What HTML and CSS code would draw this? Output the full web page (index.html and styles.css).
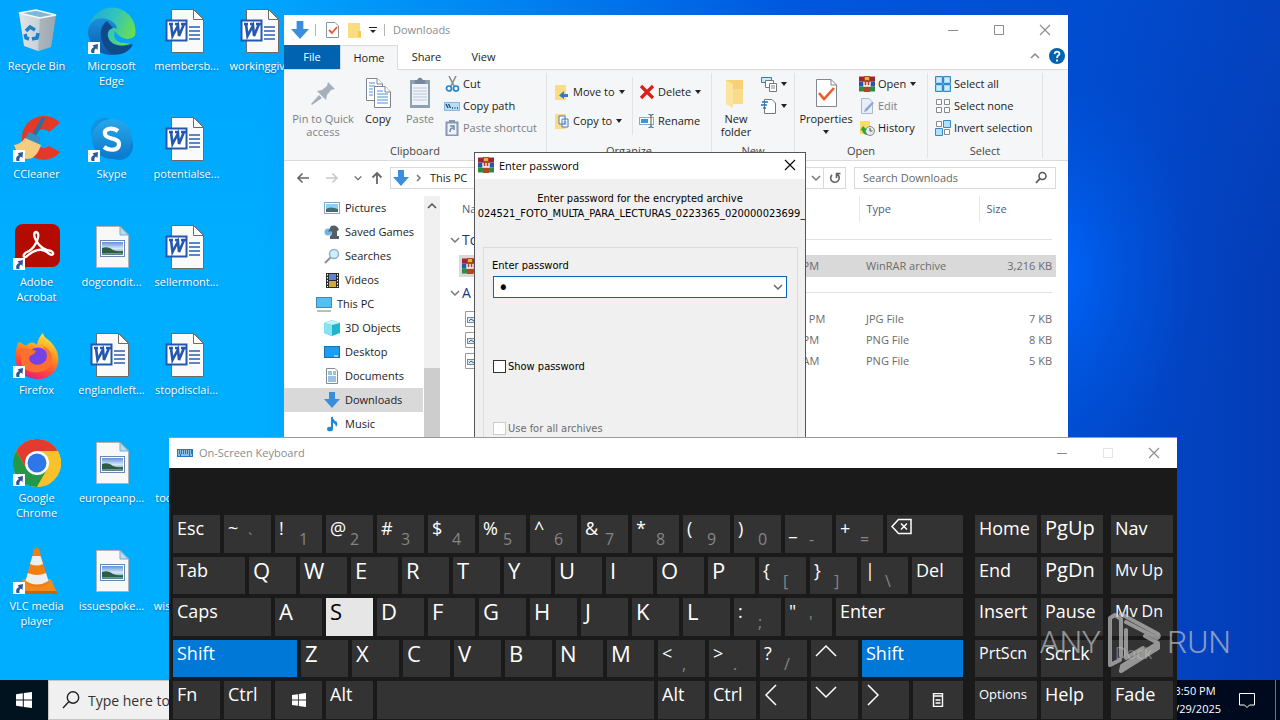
FILE: index.html
```html
<!DOCTYPE html>
<html lang="en">
<head>
<meta charset="utf-8">
<title>Desktop</title>
<link rel="stylesheet" href="styles.css">
</head>
<body>
<svg class="defs" aria-hidden="true">
  <defs>
    <linearGradient id="gEdge" x1="0" y1="0" x2="1" y2="0.5"><stop offset="0" stop-color="#1fa6d8"/><stop offset=".5" stop-color="#30c3c0"/><stop offset="1" stop-color="#6be04a"/></linearGradient>
    <linearGradient id="gEdge2" x1="0" y1="0" x2="0" y2="1"><stop offset="0" stop-color="#1b8fe0"/><stop offset="1" stop-color="#0c59a4"/></linearGradient>
    <linearGradient id="gFire" x1=".8" y1="0" x2=".4" y2="1"><stop offset="0" stop-color="#fff04a"/><stop offset=".4" stop-color="#ff9a1f"/><stop offset=".75" stop-color="#ff4a36"/><stop offset="1" stop-color="#e3207c"/></linearGradient>
    <linearGradient id="gSky" x1="0" y1="0" x2="0" y2="1"><stop offset="0" stop-color="#28a8ea"/><stop offset="1" stop-color="#0a78cc"/></linearGradient>
    <linearGradient id="gPhoto" x1="0" y1="0" x2="0" y2="1"><stop offset="0" stop-color="#5d94d8"/><stop offset=".5" stop-color="#d5e8f4"/><stop offset="1" stop-color="#4a7f84"/></linearGradient>
    <linearGradient id="gBin" x1="0" y1="0" x2="1" y2="0"><stop offset="0" stop-color="#dfe5e8"/><stop offset=".55" stop-color="#c9d1d6"/><stop offset="1" stop-color="#8d9faa"/></linearGradient>
  </defs>
  <symbol id="shortcut" viewBox="0 0 12 12"><rect width="12" height="12" fill="#fff"/><path d="M3.500 11C2.600 8 3.500 6 6 5L4.500 3.200 10 2 9.500 8 8 6.600C6.500 7.500 6 9 6.500 11z" fill="#2b5797"/></symbol>
  <symbol id="bin" viewBox="0 0 48 48"><path d="M6 6 23 3 43 8 38 40 25 44 11 39z" fill="url(#gBin)"/><path d="M27 11 43 8 38 40 25 44z" fill="#9faab2" opacity=".7"/><path d="M6 6 23 3 43 8 27 11z" fill="#7fb9d6" stroke="#f4f8fa" stroke-width="1.500"/><g fill="none" stroke="#1d7fc8" stroke-width="3.500"><path d="M13 24 17 20 22 23"/><path d="M25 26 24 31 19 32"/><path d="M12 27 13 31 16 32"/></g></symbol>
  <symbol id="edge" viewBox="0 0 48 48"><circle cx="24" cy="24" r="23.500" fill="url(#gEdge)"/><path d="M0 25C1 12 12 10 19 12 26 14 29 19 29 22 23 18 18 24 20 30 22 38 33 41 45 36 40 44 32 48 24 48 10 48 1 38 0 25z" fill="url(#gEdge2)"/><path d="M19 14C10 20 10 38 24 47 34 49 42 44 45 37 33 42 22 38 20 30 19 25 21 22 25 21z" fill="#114a8b"/><path d="M27 24C33 34 45 34 48 27 49 42 43 36 36 36 30 36 24 32 27 24z" fill="#00a5ff"/></symbol>
  <symbol id="word" viewBox="4 0 48 48"><path d="M12.500 2.500H35L44.500 12V45.500H12.500z" fill="#fafafa" stroke="#6f6a66"/><path d="M34.500 2.500V12.500H44.500z" fill="#fff" stroke="#6f6a66"/><path d="M30 20H41M30 24H41M30 28H41M30 32H41" stroke="#2b5fb5" stroke-width="1.300"/><rect x="7.500" y="13.500" width="20" height="20" fill="#fff" stroke="#2457ae" stroke-width="2"/><path d="M10 17H14M16 17H20M22 17H27M12 17 13.500 29 19 18.500 20 29 25 17" fill="none" stroke="#2457ae" stroke-width="2.600"/></symbol>
  <symbol id="photo" viewBox="0 0 48 48"><path d="M8.500 3.500H32L40.500 12V44.500H8.500z" fill="#f8f8f8" stroke="#b4b0b8"/><path d="M32 3.500V12H40.500z" fill="#b9dcf3" stroke="#7aa9cc"/><rect x="12.500" y="17.500" width="24" height="16" fill="#fff" stroke="#6986b5"/><rect x="14" y="19" width="21" height="13" fill="url(#gPhoto)"/><path d="M14 25Q21 23 25 27 30 29 35 28V30H14z" fill="#2f5c46"/></symbol>
  <symbol id="ccleaner" viewBox="0 0 48 48"><path d="M47 8C34-6 8 2 9 25 10 45 36 51 47 37L36 31C29 36 22 32 22 24 22 15 31 12 36 17z" fill="#e23a26"/><path d="M30 4 19 24" stroke="#2d6f9f" stroke-width="4" stroke-linecap="round"/><path d="M16 17 27 22 27 30 12 24z" fill="#3b8ec4"/><path d="M12 23 28 30Q23 45 13 44 4 40 1 30 8 29 12 23z" fill="#f4cd7e"/></symbol>
  <symbol id="skype" viewBox="0 0 48 48"><circle cx="17" cy="17" r="14" fill="#1192dc"/><circle cx="31" cy="31" r="14" fill="#0a80d0"/><circle cx="24" cy="24" r="20" fill="url(#gSky)"/><path d="M30 16C25 12 16 13 17 19 18 25 31 22 31 29 31 36 21 36 16 32" fill="none" stroke="#fff" stroke-width="4.200"/></symbol>
  <symbol id="acrobat" viewBox="0 0 48 48"><rect x="2" y="1" width="45" height="43" rx="8" fill="#b30b00"/><path d="M23 9C18 10 24 26 38 28 42 30 40 34 35 30 29 24 20 27 13 34 9 35 10 30 16 28 22 25 29 10 23 9z" fill="none" stroke="#fff" stroke-width="2.300"/></symbol>
  <symbol id="firefox" viewBox="0 0 48 48"><path d="M5 12C9 9 9 15 14 14 19 9 23 13 24 14 25 7 29 3 30 2 31 8 36 7 41 15 51 29 43 48 25 48 9 48-3 34 5 12z" fill="url(#gFire)"/><circle cx="25" cy="27" r="10.500" fill="#7542e5"/><path d="M5 19C10 15 17 18 23 20 21 25 16 23 16 28 18 35 29 36 33 29 36 22 31 17 29 15 39 17 41 28 37 35 31 44 13 43 9 34 7 30 9 24 5 19z" fill="#ff6f2f"/></symbol>
  <symbol id="chrome" viewBox="0 0 48 48"><circle cx="24" cy="24" r="24" fill="#f9c22b"/><path d="M3.200 12A24 24 0 0 1 44.800 12H24L13.600 30z" fill="#e33b2e"/><path d="M3.200 12A24 24 0 0 0 24 48L34.400 30 13.600 30z" fill="#249847"/><path d="M24 12H44.800A24 24 0 0 1 24 48L34.400 30z" fill="#f9c22b"/><circle cx="24" cy="24" r="12" fill="#fff"/><circle cx="24" cy="24" r="9.500" fill="#2f76e8"/></symbol>
  <symbol id="vlc" viewBox="0 0 48 48"><path d="M10 32H38L44 46H3z" fill="#f08a1c"/><path d="M3 44H44V47H3z" fill="#c96408"/><path d="M21 2Q24 0 26 2L36 36Q24 44 12 36z" fill="#f47d11"/><path d="M19.500 9H27.500L30 17Q24 20 17 17zM14.800 26Q24 30 33 26L35.500 34Q24 41 12.500 34z" fill="#eceff0"/></symbol>
  <symbol id="down" viewBox="0 0 16 16"><path d="M5 0H11V7H16L8 16 0 7H5z" fill="#3b8ede"/></symbol>
  <symbol id="check" viewBox="0 0 16 16"><path d="M2.500.5H11L14.500 4V15.500H2.500z" fill="#fff" stroke="#8a949c"/><path d="M5 8 8 11 13 5" fill="none" stroke="#e8572a" stroke-width="1.800"/></symbol>
  <symbol id="folder" viewBox="0 0 16 16"><path d="M2 1H14V9L15 10V16H2z" fill="#fcdc80"/><path d="M12 9H15V15H12z" fill="#f3c95c"/></symbol>
  <symbol id="bigfolder" viewBox="0 0 32 32"><path d="M6 3H23V25H6z" fill="#f6d175"/><path d="M6 3 13 7V31L6 27z" fill="#fbe49b"/><path d="M13 12H23V27H13z" fill="#f9dc8b"/></symbol>
  <symbol id="caret" viewBox="0 0 8 8"><path d="M1 2H7L4 6z" fill="#222"/></symbol>
  <symbol id="pin" viewBox="0 0 32 32"><path d="M21 5 28 12 24 13 20 18 19 23 10 14 15 13 20 9zM12 18 15 21 5 28 4 27z" fill="#a5b0bb"/></symbol>
  <symbol id="copy" viewBox="0 0 32 32"><g fill="#fff" stroke="#7c858e"><path d="M4.500 1.500H15L20.500 7V23.500H4.500z"/><path d="M15 1.500V7H20.500" /><path d="M12.500 9.500H23L28.500 15V30.500H12.500z"/><path d="M23 9.500V15H28.500" /></g><path d="M7 6H13M7 9H13M7 12H11M7 15H11M7 18H11M15 14H21M15 17H26M15 20H26M15 23H26M15 26H26" stroke="#4a90d8"/></symbol>
  <symbol id="paste" viewBox="0 0 32 32"><rect x="6" y="3" width="20" height="28" fill="#90a0b4"/><rect x="8" y="7" width="16" height="21" fill="#f0f4fa"/><path d="M11 3H13Q16-2 19 3H21V7H11z" fill="#77879a"/><path d="M9 11H23M9 14H23M9 17H23M9 20H23M9 23H23" stroke="#b9c5d6"/></symbol>
  <symbol id="cut" viewBox="0 0 16 16"><path d="M5 0 10 10M12 0 7 10" stroke="#7f8b95" stroke-width="1.500"/><g fill="none" stroke="#2484cc" stroke-width="1.700"><circle cx="5" cy="12.500" r="2.500"/><circle cx="12" cy="12.500" r="2.500"/></g></symbol>
  <symbol id="path" viewBox="0 0 16 16"><rect x=".5" y="4.500" width="15" height="8" fill="#b7dcf6" stroke="#83b9e2"/><path d="M2 6 4 10M4.500 6 6.500 10M8 10H9M10.500 10H11.500M13 10H14" stroke="#24466b" stroke-width="1.300"/></symbol>
  <symbol id="pasteshort" viewBox="0 0 16 16"><path d="M2.500 2.500H13.500V15.500H2.500z" fill="#eef3fa" stroke="#8698b2" stroke-width="2"/><rect x="5" width="6" height="3" fill="#8698b2"/><path d="M6 12Q6 8 9 8M6 6H10V10" fill="none" stroke="#6d86a8" stroke-width="1.500"/></symbol>
  <symbol id="moveto" viewBox="0 0 16 16"><path d="M1 1H12V16H1z" fill="#fbdc83"/><path d="M14 10H10V7L5 11.500 10 15V13H14z" fill="#2a7ed0"/></symbol>
  <symbol id="copyto" viewBox="0 0 16 16"><path d="M1 1H12V16H1z" fill="#fbdc83"/><path d="M5 3H11V11H5zM8 6H14V14H8z" fill="#fff" stroke="#4b78b4"/><path d="M9.500 9H12.500M9.500 11H12.500" stroke="#4b90d8"/></symbol>
  <symbol id="delete" viewBox="0 0 16 16"><path d="M2 2 14 14M14 2 2 14" stroke="#d9201a" stroke-width="3.200"/></symbol>
  <symbol id="rename" viewBox="0 0 16 16"><rect x=".5" y="4.500" width="14" height="7" fill="#fff" stroke="#8ea8bd"/><rect x="2" y="6" width="7" height="4" fill="#3a94dc"/><path d="M9.500 1.500Q12 1 12 3V13Q12 15 9.500 14.500M14.500 1.500Q12 1 12 3M12 13Q12 15 14.500 14.500" fill="none" stroke="#555"/></symbol>
  <symbol id="newitem" viewBox="0 0 16 16"><path d="M.5 1.500H10.500V6.500H.5z" fill="#cfe8f8" stroke="#2f7eb6"/><path d="M4.500 4.500H12.500V11.500H4.500z" fill="#fff" stroke="#777"/><path d="M8.500 7.500H15.500V15.500H8.500z" fill="#fff" stroke="#777"/><path d="M10 10H14M10 12H14" stroke="#888"/></symbol>
  <symbol id="easy" viewBox="0 0 16 16"><path d="M3.500 1.500H11L14.500 5V15.500H3.500z" fill="#fff" stroke="#777"/><path d="M1 4H7M0 7H6M2 10H5" stroke="#1f76bd" stroke-width="1.300"/></symbol>
  <symbol id="props" viewBox="0 0 32 32"><path d="M6.500 2.500H21L26.500 8V29.500H6.500z" fill="#fff" stroke="#808890"/><path d="M21 2.500V8H26.500" fill="none" stroke="#808890"/><path d="M9 16 14 22 24 11" fill="none" stroke="#ea5b27" stroke-width="2.600"/></symbol>
  <symbol id="rar" viewBox="0 0 16 16"><rect width="16" height="5" y=".5" fill="#a3232e"/><rect width="16" height="5" y="5.500" fill="#2857a6"/><rect width="16" height="5" y="10.500" fill="#2f8a43"/><rect x="5" width="6" height="16" fill="#b34724"/><path d="M5 6V10H11V6M8 6V10" fill="none" stroke="#fff" stroke-width="1.300"/><rect x="6" y="1" width="4" height="3" fill="#e3b43c"/></symbol>
  <symbol id="edit" viewBox="0 0 16 16"><path d="M2.500.5H10L13.500 4V15.500H2.500z" fill="#e7eef8" stroke="#a8b8d0"/><path d="M15 5 8 13 5 14 6 11 13 4z" fill="#93a9c8"/></symbol>
  <symbol id="history" viewBox="0 0 16 16"><path d="M1 1H11V14H1z" fill="#fbdc6a"/><circle cx="11" cy="11" r="4.500" fill="#e6e9ea" stroke="#888"/><path d="M11 8V11H13.500" fill="none" stroke="#555"/><path d="M1 11 4 6 8 10H6Q6 13 9 15 4 15 3 10z" fill="#2ea33c"/></symbol>
  <symbol id="selall" viewBox="0 0 16 16"><path d="M.5.5H7.500V7.500H.5zM8.500.5H15.500V7.500H8.500zM.5 8.500H7.500V15.500H.5zM8.500 8.500H15.500V15.500H8.500z" fill="#9fd5fb" stroke="#3289c9"/><path d="M2 2H6V6H2zM10 2H14V6H10zM2 10H6V14H2zM10 10H14V14H10z" fill="#cdeaff"/></symbol>
  <symbol id="selnone" viewBox="0 0 16 16"><path d="M1.500 1.500H6.500V6.500H1.500zM9.500 1.500H14.500V6.500H9.500zM1.500 9.500H6.500V14.500H1.500zM9.500 9.500H14.500V14.500H9.500z" fill="#fff" stroke="#8a8a8a"/></symbol>
  <symbol id="selinv" viewBox="0 0 16 16"><path d="M1.500 1.500H6.500V6.500H1.500zM9.500 9.500H14.500V14.500H9.500z" fill="#fff" stroke="#8a8a8a"/><path d="M8.500.5H15.500V7.500H8.500zM.5 8.500H7.500V15.500H.5z" fill="#b5defc" stroke="#3289c9"/></symbol>
  <symbol id="chev-d" viewBox="0 0 12 12"><path d="M2 4 6 8 10 4" fill="none" stroke="currentColor" stroke-width="1.500"/></symbol>
  <symbol id="chev-u" viewBox="0 0 12 12"><path d="M2 8 6 4 10 8" fill="none" stroke="currentColor" stroke-width="1.500"/></symbol>
  <symbol id="chev-r" viewBox="0 0 12 12"><path d="M4 3 7 6 4 9" fill="none" stroke="currentColor" stroke-width="1.500"/></symbol>
  <symbol id="arrow-l" viewBox="0 0 16 16"><path d="M14 8H3M7.500 3.500 3 8 7.500 12.500" fill="none" stroke="currentColor" stroke-width="1.600"/></symbol>
  <symbol id="arrow-r" viewBox="0 0 16 16"><path d="M2 8H13M8.500 3.500 13 8 8.500 12.500" fill="none" stroke="currentColor" stroke-width="1.500"/></symbol>
  <symbol id="arrow-u" viewBox="0 0 16 16"><path d="M8 14V3M3.500 7.500 8 3 12.500 7.500" fill="none" stroke="currentColor" stroke-width="1.800"/></symbol>
  <symbol id="refresh" viewBox="0 0 16 16"><path d="M10.500 4.500A4.300 4.300 0 1 1 5 4.800M9.500 8 9.500 3.500H13.500" fill="none" stroke="#606060" stroke-width="1.600"/></symbol>
  <symbol id="loupe" viewBox="0 0 16 16"><circle cx="9.500" cy="6" r="3.500" fill="none" stroke="currentColor" stroke-width="1.500"/><path d="M7 8.500 3 13" stroke="currentColor" stroke-width="1.800"/></symbol>
  <symbol id="min" viewBox="0 0 12 12"><path d="M1 6.500H11" stroke="currentColor"/></symbol>
  <symbol id="max" viewBox="0 0 12 12"><path d="M1.500 1.500H10.500V10.500H1.500z" fill="none" stroke="currentColor"/></symbol>
  <symbol id="close" viewBox="0 0 12 12"><path d="M1 1 11 11M11 1 1 11" stroke="currentColor" stroke-width="1.100"/></symbol>
  <symbol id="pictures" viewBox="0 0 16 16"><rect x=".5" y="2.500" width="15" height="11" fill="#fff" stroke="#8aa6bd"/><rect x="2" y="4" width="12" height="8" fill="#8ed0f2"/><path d="M2 9Q6 6 14 9V12H2z" fill="#3d6f73"/></symbol>
  <symbol id="games" viewBox="0 0 16 16"><circle cx="4" cy="8" r="3.500" fill="#6fb4e6"/><path d="M7 2Q13 0 15 6L13 7V12H15V15H6V12Q9 10 7 7L4 8z" fill="#565d66"/></symbol>
  <symbol id="searches" viewBox="0 0 16 16"><circle cx="10" cy="6" r="4.500" fill="#d3edfb" stroke="#8db3cc" stroke-width="1.500"/><path d="M6.500 9.500 1 15" stroke="#8a9096" stroke-width="2"/></symbol>
  <symbol id="videos" viewBox="0 0 16 16"><rect x="2" y="1" width="13" height="15" fill="#2a2a2a"/><rect x="5" y="2" width="7" height="6" fill="#5f83cf"/><rect x="5" y="9" width="7" height="6" fill="#d0a83c"/><path d="M3.500 2V15M13.500 2V15" stroke="#fff" stroke-dasharray="1.500 1.500"/></symbol>
  <symbol id="pc" viewBox="0 0 16 16"><rect x=".5" y="1.500" width="15" height="10" fill="#55bff2" stroke="#3c89b8"/><path d="M1 15H15" stroke="#6f7a82"/></symbol>
  <symbol id="cube" viewBox="0 0 16 16"><path d="M0 3 8 0 16 3V13L8 16 0 13z" fill="#1fb5cf"/><path d="M0 3 8 5V16L0 13z" fill="#86e4ee"/><path d="M0 3 8 0 16 3 8 5z" fill="#c3f4f7"/></symbol>
  <symbol id="desk" viewBox="0 0 16 16"><rect x=".5" y="2.500" width="15" height="11" fill="#1b9cf0" stroke="#1471b8"/><path d="M10 12H14" stroke="#fff"/></symbol>
  <symbol id="docs" viewBox="0 0 16 16"><path d="M2.500.5H11L13.500 3V15.500H2.500z" fill="#fff" stroke="#848c94"/><path d="M4 4H8M4 6H8M9 4H12M9 6H12M4 9H12M4 11H12M4 13H12" stroke="#3684c6"/></symbol>
  <symbol id="music" viewBox="0 0 16 16"><path d="M8 1V12" stroke="#1e87d6" stroke-width="2"/><path d="M8 0Q9 4 13 6 14 9 12 11 12 8 8 6z" fill="#1e87d6"/><ellipse cx="6" cy="13" rx="3" ry="2.300" fill="#1e87d6"/></symbol>
  <symbol id="imgfile" viewBox="0 0 16 16"><path d="M3.500.5H12L15.500 4V15.500H3.500z" fill="#fff" stroke="#999"/><rect x="5.500" y="6.500" width="7" height="5" fill="#d9ecf6" stroke="#6b8cab"/><path d="M7 10 9 8 12 10" stroke="#375f78" fill="none"/></symbol>
  <symbol id="kbd" viewBox="0 0 16 10"><rect y="1" width="16" height="8" fill="#2376c8"/><path d="M1 3H15M1 5H15" stroke="#fff" stroke-dasharray="1 1"/><path d="M1 7H3M4 7H12M13 7H15" stroke="#fff"/></symbol>
  <symbol id="win" viewBox="0 0 16 16"><path d="M0 2.300 6.800 1.300V7.500H0zM7.800 1.100 16 0V7.500H7.800zM0 8.500H6.800V14.700L0 13.700zM7.800 8.500H16V16L7.800 14.900z" fill="#fff"/></symbol>
</svg>

<main class="desktop">
  <div class="icons">
    <button class="app"><svg><use href="#bin"/></svg><span>Recycle Bin</span></button>
    <button class="app link"><svg><use href="#ccleaner"/></svg><svg class="badge"><use href="#shortcut"/></svg><span>CCleaner</span></button>
    <button class="app link"><svg><use href="#acrobat"/></svg><svg class="badge"><use href="#shortcut"/></svg><span>Adobe Acrobat</span></button>
    <button class="app link"><svg><use href="#firefox"/></svg><svg class="badge"><use href="#shortcut"/></svg><span>Firefox</span></button>
    <button class="app link"><svg><use href="#chrome"/></svg><svg class="badge"><use href="#shortcut"/></svg><span>Google Chrome</span></button>
    <button class="app link"><svg><use href="#vlc"/></svg><svg class="badge"><use href="#shortcut"/></svg><span>VLC media player</span></button>
    <button class="app link"><svg><use href="#edge"/></svg><svg class="badge"><use href="#shortcut"/></svg><span>Microsoft Edge</span></button>
    <button class="app link"><svg><use href="#skype"/></svg><svg class="badge"><use href="#shortcut"/></svg><span>Skype</span></button>
    <button class="app"><svg><use href="#photo"/></svg><span>dogcondit...</span></button>
    <button class="app"><svg><use href="#word"/></svg><span>englandleft...</span></button>
    <button class="app"><svg><use href="#photo"/></svg><span>europeanp...</span></button>
    <button class="app"><svg><use href="#photo"/></svg><span>issuespoke...</span></button>
    <button class="app"><svg><use href="#word"/></svg><span>membersb...</span></button>
    <button class="app"><svg><use href="#word"/></svg><span>potentialse...</span></button>
    <button class="app"><svg><use href="#word"/></svg><span>sellermont...</span></button>
    <button class="app"><svg><use href="#word"/></svg><span>stopdisclai...</span></button>
    <button class="app"><svg></svg><span>toocountri...</span></button>
    <button class="app"><svg></svg><span>wisconsinp...</span></button>
    <button class="app"><svg><use href="#word"/></svg><span>workinggiv...</span></button>
  </div>

  <section class="explorer" aria-label="Downloads">
    <header class="titlebar">
      <div class="quick">
        <svg class="i18"><use href="#down"/></svg><i></i>
        <svg class="i16"><use href="#check"/></svg><svg class="i16"><use href="#folder"/></svg><svg class="drop" viewBox="0 0 8 8"><path d="M0 1.500H8" stroke="#222"/><path d="M1 4H7L4 7z" fill="#222"/></svg><i></i>
        <span>Downloads</span>
      </div>
      <div class="controls"><button aria-label="Minimize"><svg><use href="#min"/></svg></button><button aria-label="Maximize"><svg><use href="#max"/></svg></button><button aria-label="Close"><svg><use href="#close"/></svg></button></div>
    </header>
    <nav class="tabs">
      <button class="file">File</button><button class="on">Home</button><button>Share</button><button>View</button>
      <svg class="i12"><use href="#chev-u"/></svg>
      <svg class="help" viewBox="0 0 16 16"><circle cx="8" cy="8" r="8" fill="#0063b1"/><path d="M5.500 6Q6 3.500 8.300 3.600 11 4 10.300 6.500 8 8 8 10M8 11.500V13.500" fill="none" stroke="#fff" stroke-width="1.800"/></svg>
    </nav>
    <div class="ribbon">
      <div class="group clip">
        <div class="tools">
          <button class="big dim pinb"><svg><use href="#pin"/></svg>Pin to Quick access</button>
          <button class="big"><svg><use href="#copy"/></svg>Copy</button>
          <button class="big dim"><svg><use href="#paste"/></svg>Paste</button>
          <div class="stack">
            <button><svg><use href="#cut"/></svg>Cut</button>
            <button><svg><use href="#path"/></svg>Copy path</button>
            <button class="dim"><svg><use href="#pasteshort"/></svg>Paste shortcut</button>
          </div>
        </div>
        <h2>Clipboard</h2>
      </div>
      <div class="group org">
        <div class="tools">
          <div class="stack loose"><button><svg><use href="#moveto"/></svg>Move to<svg class="c"><use href="#caret"/></svg></button><button><svg><use href="#copyto"/></svg>Copy to<svg class="c"><use href="#caret"/></svg></button></div>
          <div class="stack loose ruled"><button><svg><use href="#delete"/></svg>Delete<svg class="c"><use href="#caret"/></svg></button><button><svg><use href="#rename"/></svg>Rename</button></div>
        </div>
        <h2>Organize</h2>
      </div>
      <div class="group new">
        <div class="tools">
          <button class="big"><svg><use href="#bigfolder"/></svg>New folder</button>
          <div class="stack"><button aria-label="New item"><svg><use href="#newitem"/></svg><svg class="c"><use href="#caret"/></svg></button><button aria-label="Easy access"><svg><use href="#easy"/></svg><svg class="c"><use href="#caret"/></svg></button></div>
        </div>
        <h2>New</h2>
      </div>
      <div class="group open">
        <div class="tools">
          <button class="big"><svg><use href="#props"/></svg>Properties<svg class="c"><use href="#caret"/></svg></button>
          <div class="stack"><button><svg><use href="#rar"/></svg>Open<svg class="c"><use href="#caret"/></svg></button><button class="dim"><svg><use href="#edit"/></svg>Edit</button><button><svg><use href="#history"/></svg>History</button></div>
        </div>
        <h2>Open</h2>
      </div>
      <div class="group sel">
        <div class="tools">
          <div class="stack"><button><svg><use href="#selall"/></svg>Select all</button><button><svg><use href="#selnone"/></svg>Select none</button><button><svg><use href="#selinv"/></svg>Invert selection</button></div>
        </div>
        <h2>Select</h2>
      </div>
    </div>
    <div class="location">
      <div class="history"><svg class="i16"><use href="#arrow-l"/></svg><svg class="i16 off"><use href="#arrow-r"/></svg><svg class="i10"><use href="#chev-d"/></svg><svg class="i16"><use href="#arrow-u"/></svg></div>
      <div class="address"><svg class="i16"><use href="#down"/></svg><svg class="i12"><use href="#chev-r"/></svg><span>This PC</span><svg class="i12 end"><use href="#chev-d"/></svg><button aria-label="Refresh"><svg class="i16"><use href="#refresh"/></svg></button></div>
      <label class="search"><input type="text" placeholder="Search Downloads" aria-label="Search Downloads"><svg class="i16"><use href="#loupe"/></svg></label>
    </div>
    <div class="content">
      <ul class="tree">
        <li><svg><use href="#pictures"/></svg>Pictures</li>
        <li><svg><use href="#games"/></svg>Saved Games</li>
        <li><svg><use href="#searches"/></svg>Searches</li>
        <li><svg><use href="#videos"/></svg>Videos</li>
        <li class="top"><svg><use href="#pc"/></svg>This PC</li>
        <li><svg><use href="#cube"/></svg>3D Objects</li>
        <li><svg><use href="#desk"/></svg>Desktop</li>
        <li><svg><use href="#docs"/></svg>Documents</li>
        <li class="on"><svg><use href="#down"/></svg>Downloads</li>
        <li><svg><use href="#music"/></svg>Music</li>
      </ul>
      <div class="scroll"><svg class="i12"><use href="#chev-u"/></svg><div class="thumb"></div></div>
      <div class="files">
        <table>
          <colgroup><col class="c-exp"><col><col class="c-date"><col class="c-type"><col class="c-size"></colgroup>
          <thead><tr><th></th><th>Name</th><th aria-label="Date modified"></th><th class="sep">Type</th><th class="sep">Size</th></tr></thead>
          <tbody>
            <tr class="cat"><td><svg class="i12"><use href="#chev-d"/></svg></td><td colspan="4"><span>Today (1)</span></td></tr>
            <tr class="picked"><td></td><td><svg class="i16"><use href="#rar"/></svg></td><td>4/29/2025 3:49 PM</td><td>WinRAR archive</td><td class="num">3,216 KB</td></tr>
            <tr class="cat late"><td><svg class="i12"><use href="#chev-d"/></svg></td><td colspan="4"><span>A long time ago (3)</span></td></tr>
            <tr><td></td><td><svg class="i16"><use href="#imgfile"/></svg></td><td>4/13/2024 10:17 PM</td><td>JPG File</td><td class="num">7 KB</td></tr>
            <tr><td></td><td><svg class="i16"><use href="#imgfile"/></svg></td><td>4/19/2024 6:23 PM</td><td>PNG File</td><td class="num">8 KB</td></tr>
            <tr><td></td><td><svg class="i16"><use href="#imgfile"/></svg></td><td>4/20/2024 8:05 AM</td><td>PNG File</td><td class="num">5 KB</td></tr>
          </tbody>
        </table>
      </div>
    </div>
  </section>

  <section class="dialog" role="dialog" aria-label="Enter password">
    <header><svg class="i16"><use href="#rar"/></svg><span>Enter password</span><button aria-label="Close"><svg class="i12"><use href="#close"/></svg></button></header>
    <p>Enter password for the encrypted archive</p>
    <p class="name"><span>024521_FOTO_MULTA_PARA_LECTURAS_0223365_020000023699_</span></p>
    <div class="box">
      <label for="pw">Enter password</label>
      <div class="field"><input id="pw" type="password" value="s"><svg class="i12"><use href="#chev-d"/></svg></div>
      <label class="tick"><input type="checkbox">Show password</label>
      <label class="tick off"><input type="checkbox" disabled>Use for all archives</label>
    </div>
  </section>

  <footer class="taskbar">
    <button class="start" aria-label="Start"><svg class="i16"><use href="#win"/></svg></button>
    <label class="find"><svg viewBox="0 0 20 20"><circle cx="12" cy="7.500" r="5.700" fill="none" stroke="#222" stroke-width="1.400"/><path d="M8 11.500 2 18" stroke="#222" stroke-width="1.400"/></svg><input type="text" placeholder="Type here to search" aria-label="Type here to search"></label>
    <div class="clock"><span>3:50 PM</span><span>4/29/2025</span></div>
    <button class="notes" aria-label="Notifications"><svg viewBox="0 0 16 16"><path d="M.5 1.500H15.500V13H10.500L8 15.500 5.500 13H.5z" fill="none" stroke="#fff"/></svg></button>
    <i></i>
  </footer>

  <section class="osk" aria-label="On-Screen Keyboard">
    <header class="titlebar">
      <div class="quick"><svg class="kb"><use href="#kbd"/></svg><span>On-Screen Keyboard</span></div>
      <div class="controls"><button aria-label="Minimize"><svg><use href="#min"/></svg></button><button aria-label="Maximize" disabled><svg><use href="#max"/></svg></button><button aria-label="Close"><svg><use href="#close"/></svg></button></div>
    </header>
    <div class="keys">
      <div class="block main">
        <div class="row"><button>Esc</button><button>~<sub>`</sub></button><button>!<sub>1</sub></button><button>@<sub>2</sub></button><button>#<sub>3</sub></button><button>$<sub>4</sub></button><button>%<sub>5</sub></button><button>^<sub>6</sub></button><button>&amp;<sub>7</sub></button><button>*<sub>8</sub></button><button>(<sub>9</sub></button><button>)<sub>0</sub></button><button>_<sub>-</sub></button><button>+<sub>=</sub></button><button class="w76" aria-label="Backspace"><svg viewBox="0 0 22 24"><path d="M1 10.500 7.500 3.500H20V17.500H7.500zM10 7.500 16 13.500M16 7.500 10 13.500" fill="none" stroke="#fff" stroke-width="1.500"/></svg></button></div>
        <div class="row"><button class="w72">Tab</button><button class="l">Q</button><button class="l">W</button><button class="l">E</button><button class="l">R</button><button class="l">T</button><button class="l">Y</button><button class="l">U</button><button class="l">I</button><button class="l">O</button><button class="l">P</button><button>{<sub>[</sub></button><button>}<sub>]</sub></button><button>|<sub>\</sub></button><button class="w51">Del</button></div>
        <div class="row"><button class="w98">Caps</button><button class="l">A</button><button class="l hot">S</button><button class="l">D</button><button class="l">F</button><button class="l">G</button><button class="l">H</button><button class="l">J</button><button class="l">K</button><button class="l">L</button><button>:<sub>;</sub></button><button>"<sub>'</sub></button><button class="w127">Enter</button></div>
        <div class="row"><button class="w124 held">Shift</button><button class="l">Z</button><button class="l">X</button><button class="l">C</button><button class="l">V</button><button class="l">B</button><button class="l">N</button><button class="l">M</button><button>&lt;<sub>,</sub></button><button>&gt;<sub>.</sub></button><button>?<sub>/</sub></button><button aria-label="Up"><svg viewBox="0 0 22 24"><path d="M1 15 11 5 21 15" fill="none" stroke="#fff" stroke-width="1.500"/></svg></button><button class="w101 held">Shift</button></div>
        <div class="row"><button>Fn</button><button>Ctrl</button><button class="mid" aria-label="Windows"><svg class="i14"><use href="#win"/></svg></button><button>Alt</button><button class="w277" aria-label="Space"></button><button>Alt</button><button>Ctrl</button><button aria-label="Left"><svg viewBox="0 0 22 24"><path d="M12 3 2 13 12 23" fill="none" stroke="#fff" stroke-width="1.500"/></svg></button><button aria-label="Down"><svg viewBox="0 0 22 24"><path d="M1 5 11 15 21 5" fill="none" stroke="#fff" stroke-width="1.500"/></svg></button><button aria-label="Right"><svg viewBox="0 0 22 24"><path d="M2 3 12 13 2 23" fill="none" stroke="#fff" stroke-width="1.500"/></svg></button><button class="w50 mid" aria-label="Menu"><svg class="i14" viewBox="0 0 14 14"><path d="M2.500.5H11.500V13.500H2.500zM2.500 3H11.500M4.500 7H9.500M4.500 10H9.500" fill="none" stroke="#fff" stroke-width="1.400"/></svg></button></div>
      </div>
      <div class="block pair">
        <button>Home</button><button class="x">PgUp</button><button>End</button><button class="x">PgDn</button><button>Insert</button><button>Pause</button><button class="m">PrtScn</button><button>ScrLk</button><button class="s">Options</button><button>Help</button>
      </div>
      <div class="block side">
        <button>Nav</button><button class="m">Mv Up</button><button class="m">Mv Dn</button><button class="m dis">Dock</button><button>Fade</button>
      </div>
    </div>
  </section>

  <div class="mark"><span>ANY</span><svg viewBox="0 0 54 64"><g fill="none" stroke="#ccc" stroke-width="4" stroke-linejoin="round" stroke-linecap="round"><path d="M13 50 3 55V8L8 5 14 9V46"/><path d="M14 4 51 24Q53 27 50 28L19 12"/><path d="M19 20V48L36 38"/><path d="M48 35 15 56 14 61 51 38V33L38 26"/></g></svg><span>RUN</span></div>
</main>
</body>
</html>
```
FILE: styles.css
```css
* { box-sizing: border-box; }
body { margin: 0; font: 11px/14px "Open Sans", "Noto Sans", sans-serif; color: #1b1b1b; }
button { border: 0; padding: 0; margin: 0; background: none; font: inherit; color: inherit; }
input { font: inherit; color: inherit; border: 0; background: none; padding: 0; margin: 0; outline: 0; }
h2, p, ul { margin: 0; padding: 0; list-style: none; font-size: 11px; font-weight: 400; }
svg { display: block; flex: none; }
.defs { position: absolute; width: 0; height: 0; }
.i10 { width: 10px; height: 10px; }
.i12 { width: 12px; height: 12px; }
.i14 { width: 14px; height: 14px; }
.i16 { width: 16px; height: 16px; }
.i18 { width: 18px; height: 18px; }

.desktop {
  position: relative; height: 100vh; overflow: hidden; display: flex; flex-direction: column;
  background:
    radial-gradient(ellipse 190px 260px at 82% 38%, rgba(0, 104, 255, .9) 0%, rgba(0, 96, 240, .45) 40%, rgba(0, 80, 220, .12) 75%, rgba(0, 70, 200, 0) 100%),
    linear-gradient(180deg, rgba(0, 110, 255, .12), rgba(0, 110, 255, 0) 40%),
    linear-gradient(90deg, #00aeff 0%, #00aeff 20%, #0090f4 35%, #0054dc 62%, #0049cb 84%, #043cb6 100%);
}

/* desktop icons */
.icons { flex: 1; margin-left: -1px; display: grid; grid-auto-flow: column; grid-template-rows: repeat(6, 108px); grid-auto-columns: 75px; justify-content: start; align-content: start; color: #fff; }
.app { position: relative; display: flex; flex-direction: column; align-items: center; justify-content: flex-start; gap: 3px; padding-top: 7px; line-height: 15px; text-shadow: 0 1px 2px rgba(0, 40, 90, .5); }
.app svg { width: 48px; height: 48px; }
.app .badge { position: absolute; left: 14px; top: 42px; width: 12px; height: 12px; }
.app span { padding: 0 8px; }

/* windows */
.explorer { position: absolute; left: 284px; right: 212px; top: 15px; bottom: 200px; background: #fff; display: flex; flex-direction: column; }
.titlebar { height: 30px; display: flex; align-items: center; justify-content: space-between; background: #fff; color: #8c8c8c; }
.quick { display: flex; align-items: center; gap: 6px; padding-left: 7px; }
.quick i { width: 1px; height: 12px; background: #b5b5b5; margin-right: 2px; }
.quick .drop { width: 8px; height: 8px; margin: 0 1px; }
.quick .kb { width: 16px; height: 10px; }
.controls { display: flex; }
.controls button { width: 46px; height: 28px; display: grid; place-items: center; }
.controls svg { width: 12px; height: 12px; }
.controls button:disabled { color: #e4e4e4; }

.tabs { height: 25px; display: flex; align-items: stretch; border-bottom: 1px solid #dadbdc; }
.tabs button { width: 57px; }
.tabs .file { width: 56px; background: #0063b1; color: #fff; }
.tabs .on { width: 58px; background: #f5f6f7; border: solid #dadbdc; border-width: 1px 1px 0; margin-bottom: -1px; }
.tabs .i12 { margin: 5px 8px 0 auto; color: #888; }
.tabs .help { width: 16px; height: 16px; margin: 3px 3px 0 0; }

.ribbon { height: 91px; display: flex; background: #f5f6f7; border-bottom: 1px solid #dadbdc; }
.group { display: flex; flex-direction: column; border-right: 1px solid #e2e3e4; margin: 3px 0 2px; }
.group h2 { text-align: center; color: #444; line-height: 14px; }
.tools { flex: 1; display: flex; align-items: flex-start; }
.clip { width: 263px; } .org { width: 165px; } .new { width: 83px; } .open { width: 133px; } .sel { width: 115px; }
.big { width: 42px; display: flex; flex-direction: column; align-items: center; line-height: 13px; padding-top: 4px; gap: 3px; }
.pinb { width: 72px; padding-left: 4px; padding-right: 2px; margin-left: 2px; margin-right: -1px; }
.big svg { width: 32px; height: 32px; }
.big .c { width: 8px; height: 8px; }
.dim { color: #7c7f84; }
.stack { display: flex; flex-direction: column; }
.stack button { display: flex; align-items: center; gap: 3px; height: 22px; white-space: nowrap; }
.stack svg { width: 16px; height: 16px; }
.stack .c { width: 8px; height: 8px; }
.clip .stack { padding-left: 3px; }
.loose button { height: 29px; }
.loose { padding-left: 7px; margin-top: 4px; width: 85px; }
.org .ruled { padding-left: 6px; border-left: 1px solid #e2e3e4; width: 79px; }
.new .big { width: 48px; padding-left: 8px; padding-right: 8px; }
.new .stack { padding-left: 1px; }
.open .big { width: 62px; }
.open .stack { padding-left: 2px; }
.sel .stack { padding-left: 7px; }

.location { display: flex; align-items: center; height: 34px; gap: 8px; padding-right: 12px; }
.history { display: flex; align-items: center; gap: 13px; padding-left: 11px; width: 98px; color: #666; }
.history .off { color: #c8c8c8; }
.history .i10 { margin-right: -4px; }
.history svg:last-child { margin-left: -3px; }
.address { flex: 1; height: 22px; display: flex; align-items: center; gap: 4px; border: 1px solid #d9d9d9; padding-left: 2px; color: #777; }
.address span { color: #1b1b1b; margin-left: 1px; }
.address .end { margin: 0 -3px 0 auto; }
.address button { width: 22px; height: 20px; display: grid; place-items: center; border-left: 1px solid #d9d9d9; }
.search { width: 202px; height: 22px; display: flex; align-items: center; border: 1px solid #d9d9d9; padding: 0 6px 0 8px; color: #555; }
.search input { flex: 1; min-width: 0; }
::placeholder { color: #666; opacity: 1; }

.content { flex: 1; display: flex; min-height: 0; overflow: hidden; }
.tree { width: 140px; padding-top: 1px; }
.tree li { height: 24px; display: flex; align-items: center; gap: 5px; padding-left: 40px; margin-right: 1px; white-space: nowrap; }
.tree .top { padding-left: 32px; }
.tree .on { background: #d9d9d9; }
.tree svg { width: 16px; height: 16px; }
.scroll { width: 16px; background: #f0f0f0; display: flex; flex-direction: column; align-items: center; padding-top: 4px; margin-top: 1px; color: #505050; }
.thumb { width: 100%; flex: 1; margin-top: 156px; background: #cdcdcd; }
.files { flex: 1; padding: 1px 12px 0 9px; color: #6b6b6b; }
table { width: 100%; border-collapse: collapse; table-layout: fixed; }
.c-exp { width: 10px; } .c-date { width: 143px; } .c-type { width: 120px; } .c-size { width: 77px; }
th { text-align: left; font-weight: 400; height: 26px; padding: 0 7px; color: #4c607a; }
th:nth-child(2) { padding-left: 3px; }
th.sep { border-left: 1px solid #e5e9ef; }
td { height: 21px; padding: 0 4px 0 7px; white-space: nowrap; }
td:first-child { padding: 0; }
td:nth-child(2) { padding-left: 3px; }
.num { text-align: right; }
.cat td { height: 33px; padding-top: 2px; color: #1e3287; font-size: 14px; }
.cat.late td { height: 31px; padding-top: 0; }
.cat td:first-child { color: #777; }
.cat span { display: flex; align-items: center; gap: 8px; }
.cat span::after { content: ""; flex: 1; height: 1px; background: #e2e2e6; }
.picked td { height: 22px; }
.picked td:not(:first-child) { background: #d9d9d9; }

/* password prompt */
.dialog { position: absolute; left: 474px; top: 152px; width: 332px; bottom: 230px; background: #f0f0f0; border: 1px solid #555; color: #000; font: 11px/15px "DejaVu Sans Condensed", "DejaVu Sans", sans-serif; }
.dialog header { height: 26px; background: #fff; display: flex; align-items: center; gap: 5px; padding: 0 9px 2px 3px; font-family: "Open Sans", sans-serif; margin-bottom: 12px; }
.dialog header button { margin-left: auto; }
.dialog p { text-align: center; }
.dialog .name { display: flex; justify-content: center; overflow: hidden; white-space: nowrap; margin: 0 0 26px 3px; }
.box { margin: 0 7px 0 8px; border: 1px solid #dcdcdc; height: 260px; padding: 10px 10px 0 8px; display: flex; flex-direction: column; }
.field { margin: 3px 0 61px 1px; height: 22px; border: 1px solid #0a64b0; background: #fff; display: flex; align-items: center; padding: 0 2px 0 4px; color: #666; }
.field input { flex: 1; min-width: 0; height: 20px; color: #000; font-size: 20px; }
.tick { display: flex; align-items: center; gap: 2px; margin: 0 0 47px 1px; }
.tick input { appearance: none; width: 13px; height: 13px; border: 1px solid #333; background: #fff; }
.tick.off { color: #6d6d6d; }
.tick.off input { border-color: #ccc; }

/* taskbar */
.taskbar { height: 40px; display: flex; background: #000a1e; color: #fff; }
.start { width: 48px; display: grid; place-items: center; background: #00131f; }
.find { width: 345px; display: flex; align-items: center; gap: 7px; padding-left: 12px; background: #f0f0f0; border: 1px solid #c6c6c6; font-size: 14px; }
.find svg { width: 20px; height: 20px; }
.find ::placeholder { color: #333; }
.clock { margin-left: auto; display: flex; flex-direction: column; align-items: center; justify-content: center; line-height: 18px; width: 58px; }
.notes { width: 46px; display: grid; place-items: center; }
.notes svg { width: 16px; height: 16px; }
.taskbar i { width: 1px; background: #6b7384; margin: 0 4px 0 5px; }

/* on-screen keyboard */
.osk { position: absolute; left: 169px; right: 103px; top: 437px; bottom: 0; display: flex; flex-direction: column; background: #1a1a1a; border-top: 1px solid #999; color: #fff; }
.osk .titlebar { padding-left: 1px; }
.keys { flex: 1; display: flex; padding: 47px 4px 1px; font-size: 18px; line-height: 24px; }
.block { display: grid; grid-auto-rows: 1fr; gap: 4px; }
.main { flex: 790 790 0; }
.row { display: flex; gap: 4px; min-width: 0; }
.pair { flex: 128 128 0; grid-template-columns: 1fr 1fr; margin: 0 8px 0 12px; }
.side { flex: 62 62 0; }
.block button { background: #333; text-align: left; padding: 1px 4px; display: grid; grid-template-columns: 20px 1fr; justify-items: start; align-content: start; min-width: 0; white-space: nowrap; }
.block .row button { flex: 47 47 47px; }
.block .row .w50 { flex: 50 50 50px; }
.block .row .w51 { flex: 51 51 51px; }
.block .row .w72 { flex: 72 72 72px; }
.block .row .w76 { flex: 76 76 76px; }
.block .row .w98 { flex: 98 98 98px; }
.block .row .w101 { flex: 101 101 101px; }
.block .row .w124 { flex: 124 124 124px; }
.block .row .w127 { flex: 127 127 127px; }
.block .row .w277 { flex: 277 277 277px; }
.block .l { font-size: 22px; }
.block .x { font-size: 20px; }
.block .m { font-size: 16px; }
.block .s { font-size: 13px; }
.block .dis { color: #777; }
.block .held { background: #0078d7; }
.block .hot { background: #e6e6e6; color: #000; }
.block svg { width: 22px; height: 24px; }
.block .mid { grid-template-columns: 1fr; place-items: center; align-content: center; }
.block .i14 { width: 14px; height: 14px; }
sub { font-size: 16px; line-height: 20px; padding-top: 13px; color: #858585; vertical-align: baseline; height: 33px; }

.mark { position: absolute; right: 49px; bottom: 46px; display: flex; align-items: center; gap: 6px; font: 300 32px/64px "Roboto", sans-serif; color: #ccc; opacity: .65; }
.mark svg { width: 54px; height: 64px; }
```
